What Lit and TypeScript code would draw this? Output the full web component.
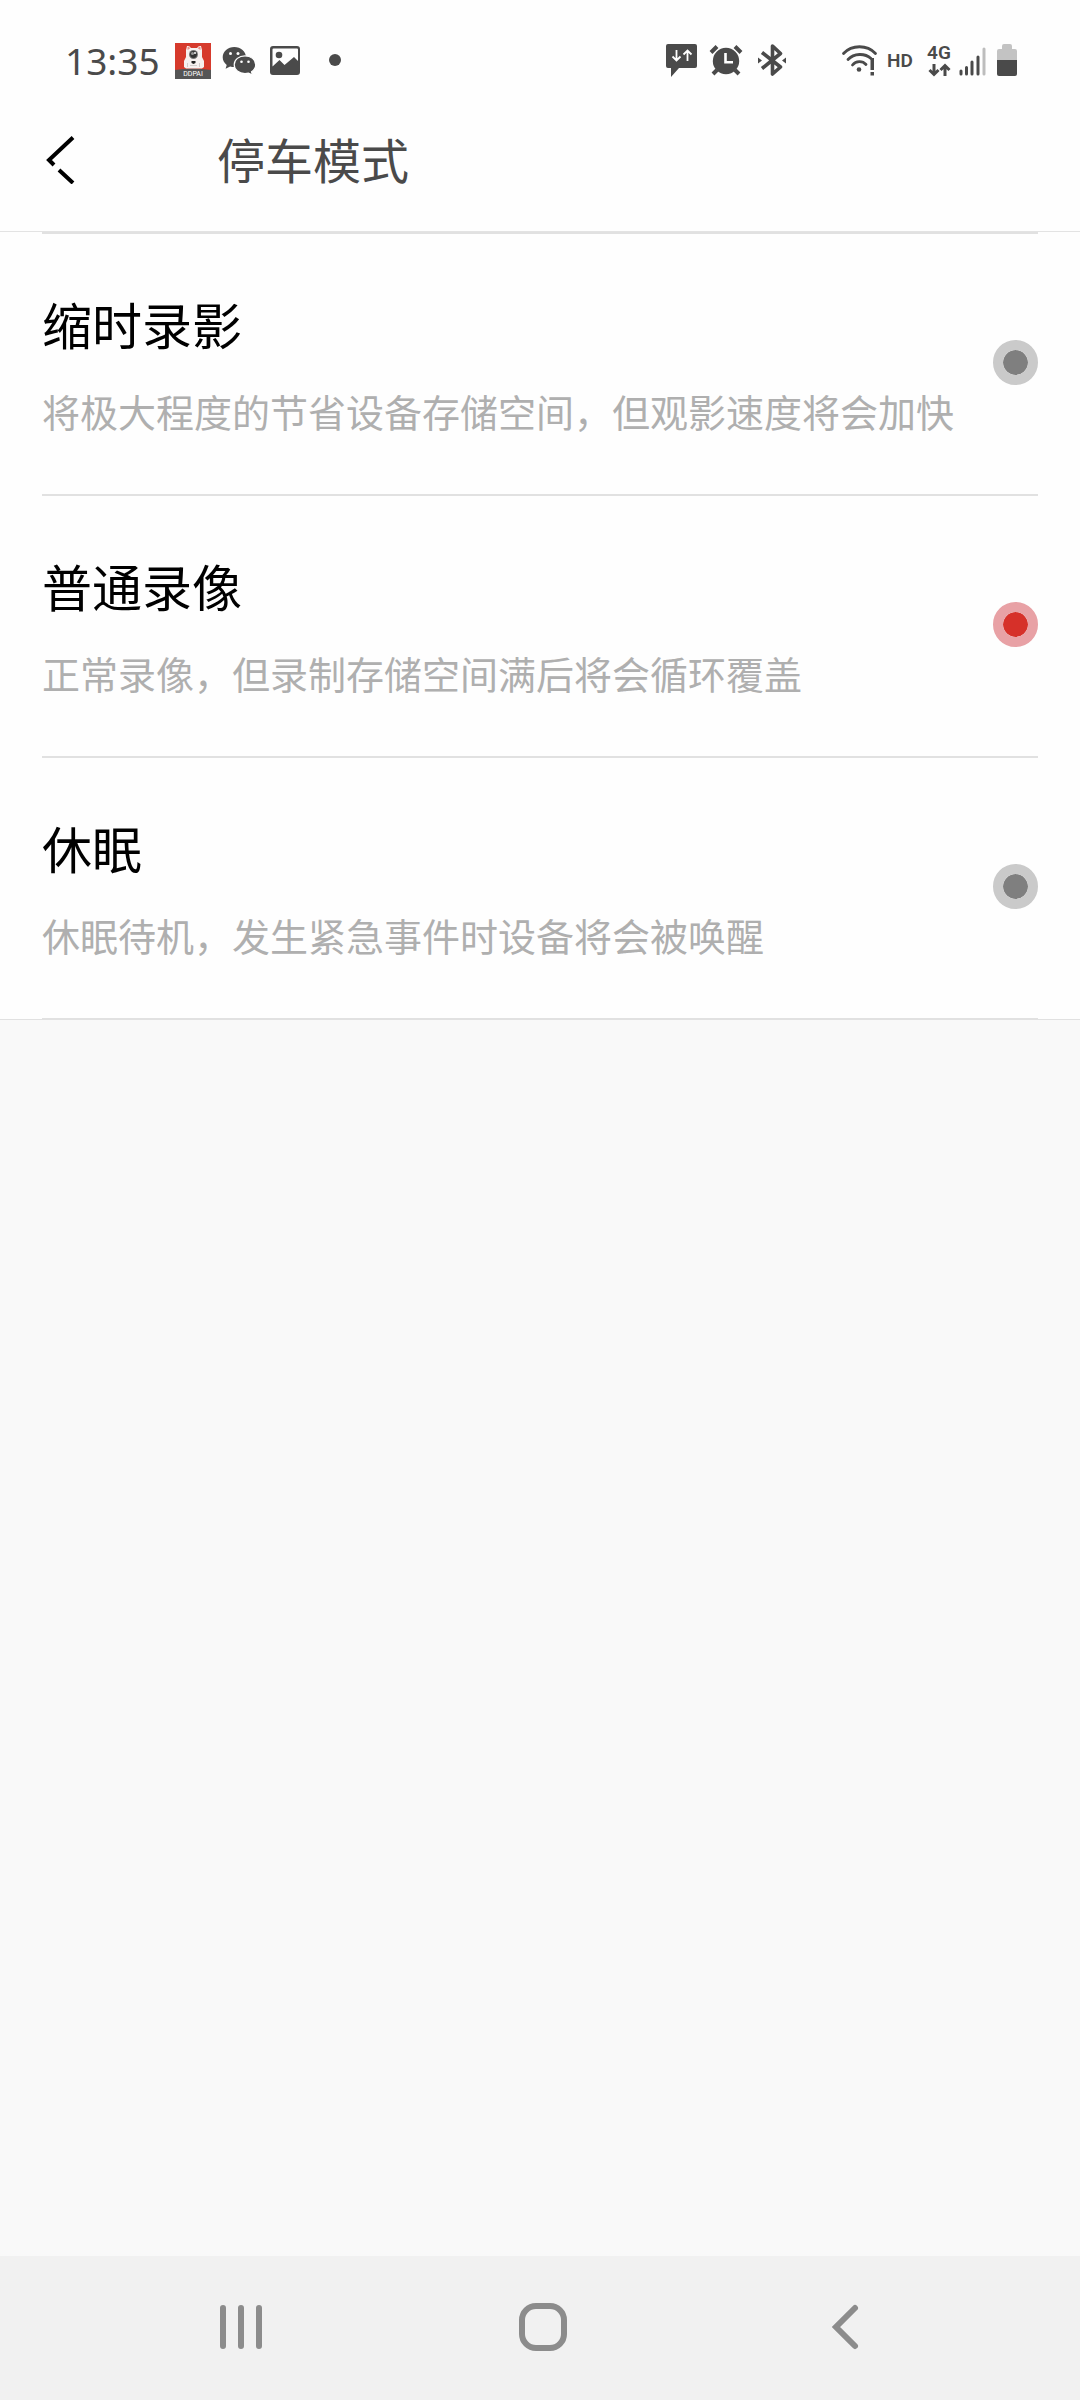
import { LitElement, html, css, svg } from "lit";
import { customElement, property, state } from "lit/decorators.js";

interface ParkingMode {
  id: string;
  title: string;
  detail: string;
}

const MODES: ParkingMode[] = [
  { id: "timelapse", title: "缩时录影", detail: "将极大程度的节省设备存储空间，但观影速度将会加快" },
  { id: "normal", title: "普通录像", detail: "正常录像，但录制存储空间满后将会循环覆盖" },
  { id: "sleep", title: "休眠", detail: "休眠待机，发生紧急事件时设备将会被唤醒" },
];

@customElement("status-bar")
export class StatusBar extends LitElement {
  static styles = css`
    :host {
      display: flex;
      justify-content: space-between;
      align-items: center;
      box-sizing: border-box;
      height: 90px;
      padding: 32px 63px 0 65px;
      color: #4a4a4a;
    }
    .group {
      display: flex;
      align-items: center;
      gap: 11px;
    }
    .alerts {
      gap: 10px;
    }
    .right {
      display: flex;
      align-items: center;
      gap: 51px;
    }
    .radio {
      gap: 8px;
    }
    .time {
      font: 37px/48px "Noto Sans", sans-serif;
      width: 99px;
    }
    .tag {
      font: 600 19px/16px Roboto, sans-serif;
    }
    .hd {
      width: 32px;
    }
    .network {
      display: flex;
      flex-direction: column;
      align-items: center;
      gap: 2px;
    }
    svg {
      display: block;
      fill: currentColor;
    }
    .stroke {
      fill: none;
      stroke: currentColor;
    }
    .logo-text {
      font: 400 7px Roboto, sans-serif;
    }
  `;

  render() {
    return html`
      <div class="group">
        <span class="time">13:35</span>
        <svg width="36" height="36" viewBox="0 0 36 36" aria-hidden="true">
          <rect width="36" height="36" fill="#d63a2c" />
          <path d="M0 27 Q18 24 36 27 V36 H0Z" fill="#555" />
          <path d="M12 3h2l2 2h6l2-2h2l1 4v7l2 4v6l-2 1.500H11L9 24v-6l2-4V7z" fill="#f6f1f0" />
          <path d="M12.500 4l1.500-.5 1 2-2.500 1.500zM25.500 4l-1.500-.5-1 2 2.500 1.500z" fill="#e99289" />
          <circle cx="18.500" cy="11.500" r="4.500" fill="#777" />
          <circle cx="18.500" cy="11.500" r="3.400" fill="#333" />
          <circle cx="17.500" cy="10.500" r="1.500" fill="#999" />
          <circle cx="20" cy="10" r="1" fill="#fff" />
          <path d="M16.500 18h4v2l-2 1-2-1z" fill="#222" />
          <path d="M15 22.500h7M12.500 20v4M24.500 20v4" stroke="#d2cccb" stroke-width="1" />
          <text class="logo-text" x="18" y="33" text-anchor="middle" fill="#fff">DDPAI</text>
        </svg>
        <svg width="36" height="36" viewBox="0 0 36 36" aria-hidden="true">
          <path d="M12.300 4C5.900 4 .7 8.600 .7 14.300c0 3.100 1.500 5.700 4 7.600L3.600 25.800l4.500-2.300c1.300.4 2.700.6 4.200.6C18.700 24.100 24 20 24 14.300S18.700 4 12.300 4z" />
          <path d="M23 12.800c-6.100 0-10.800 4-10.800 8.900s4.700 8.900 10.800 8.900c1.200 0 2.400-.2 3.500-.5l4 2-1-3.300c2.500-1.700 4.200-4.200 4.200-7.100 0-4.900-4.700-8.900-10.700-8.900z" stroke="#fff" stroke-width="1.200" />
          <g fill="#fff">
            <circle cx="8.500" cy="10.500" r="1.500" /><circle cx="16" cy="10.500" r="1.500" />
            <circle cx="19.500" cy="18.700" r="1.300" /><circle cx="26.500" cy="18.700" r="1.300" />
          </g>
        </svg>
        <svg width="36" height="36" viewBox="0 0 36 36" aria-hidden="true">
          <path fill-rule="evenodd" d="M4 3h24q3 0 3 3v23q0 3-3 3H4q-3 0-3-3V6q0-3 3-3zM3.500 6.500v17l7-6.500 5 5 9.500-8 4 4V6.500q0-1-1-1H4.500q-1 0-1 1z" />
          <circle cx="10" cy="12" r="3.300" />
        </svg>
        <svg width="36" height="36" viewBox="0 0 36 36" aria-hidden="true">
          <circle cx="19" cy="17" r="6" />
        </svg>
      </div>
      <div class="right">
        <div class="group alerts">
          <svg width="36" height="36" viewBox="0 0 36 36" aria-hidden="true">
            <path d="M6 1h27q2 0 2 2v20q0 2-2 2H17L9 34V25H6q-2 0-2-2V3q0-2 2-2z" />
            <path d="M14.500 7v10.500M10.500 13.500l4 4 4-4M25.500 18V7.500M21.500 11.500l4-4 4 4" fill="none" stroke="#fff" stroke-width="1.800" />
          </svg>
          <svg width="36" height="36" viewBox="0 0 36 36" aria-hidden="true">
            <circle cx="18" cy="18" r="13.200" />
            <path class="stroke" stroke-width="4" d="M3 9.500l6-6M27 3.500l6 6M9 27l-4 4M27 27l4 4" />
            <path d="M17.500 10v9.200H25" fill="none" stroke="#fff" stroke-width="2.600" />
          </svg>
          <svg width="36" height="36" viewBox="0 0 36 36" aria-hidden="true">
            <path class="stroke" stroke-width="3.600" stroke-linejoin="round" d="M8 9.500L26.500 24 18.500 31V3l8 7.500L8 25.500" />
            <path d="M4 14.500l4 3-4 3zM32 14.500l-4 3 4 3z" />
          </svg>
        </div>
        <div class="group radio">
          <svg width="38" height="36" viewBox="0 0 38 36" aria-hidden="true">
            <g class="stroke" stroke-width="2.800" stroke-linecap="round">
              <path d="M2.500 10.500C11 1.500 26 1.500 34.500 10.500" />
              <path d="M7 16.500c6-6.500 17-6.500 23-1" />
              <path d="M11.500 22c3.500-4.500 10-4.500 13.500-.5" />
            </g>
            <circle cx="18" cy="26.500" r="2.300" />
            <path d="M29.500 15h3.500v12h-3.500zM29.500 29h3.500v3.500h-3.500z" />
          </svg>
          <span class="tag hd">HD</span>
          <div class="network">
            <span class="tag">4G</span>
            <svg width="24" height="14" viewBox="0 0 24 14" aria-hidden="true">
              <path class="stroke" stroke-width="3" d="M7 1v10M2.500 7L7 11.500 11.500 7M18 13V3M13.500 7L18 2.500 22.500 7" />
            </svg>
          </div>
          <svg width="30" height="36" viewBox="2 0 30 36" aria-hidden="true">
            <path class="stroke" stroke-width="3" stroke-linecap="round" d="M4 28v3M9.500 24.500v6.500M15 19v12M21 14v17" />
            <path d="M27 6v25" stroke="#bdbdbd" stroke-width="3" stroke-linecap="round" />
          </svg>
          <svg width="20" height="36" viewBox="0 0 20 36" aria-hidden="true">
            <path d="M7 1h6q2 0 2 2v3h3q2 0 2 2v9H0V8q0-2 2-2h3V3q0-2 2-2z" fill="#c3c3c3" />
            <path d="M0 17h20v14q0 2-2 2H2q-2 0-2-2z" />
          </svg>
        </div>
      </div>
    `;
  }
}

@customElement("mode-option")
export class ModeOption extends LitElement {
  @property({ attribute: false }) mode!: ParkingMode;
  @property({ type: Boolean }) selected = false;

  static styles = css`
    :host {
      display: block;
    }
    .row {
      display: flex;
      align-items: center;
      justify-content: space-between;
      gap: 32px;
      padding-bottom: 4px;
      border-bottom: 2px solid #e1e1e1;
    }
    .text {
      display: flex;
      flex-direction: column;
      gap: 32px;
      padding: 59px 0 53px;
    }
    .title {
      font-size: 50px;
      line-height: 60px;
      color: #000;
    }
    .detail {
      font-size: 38px;
      line-height: 52px;
      color: #afafaf;
    }
    .dot {
      appearance: none;
      flex: none;
      box-sizing: border-box;
      width: 45px;
      height: 45px;
      margin: 0;
      border: 10px solid #cacaca;
      border-radius: 50%;
      background: #7f7f7f;
      background-clip: padding-box;
    }
    .dot:checked {
      border-color: #e8a1a5;
      background-color: #d63029;
    }
  `;

  private choose() {
    this.dispatchEvent(new CustomEvent("choose", { detail: this.mode.id }));
  }

  render() {
    return html`
      <label class="row" for="choice">
        <span class="text">
          <span class="title">${this.mode.title}</span>
          <span class="detail">${this.mode.detail}</span>
        </span>
        <input class="dot" id="choice" type="radio" name="mode" .checked=${this.selected} @change=${this.choose} />
      </label>
    `;
  }
}

const RECENTS = svg`<path d="M6 5v38M24 5v38M42 5v38" />`;
const HOME = svg`<rect x="3" y="3" width="42" height="42" rx="14" />`;
const BACK = svg`<path d="M34 5L15 24l19 19" />`;

@customElement("navigation-bar")
export class NavigationBar extends LitElement {
  static styles = css`
    :host {
      display: block;
      background: #f1f1f1;
    }
    .bar {
      display: grid;
      grid-template-columns: repeat(3, 1fr);
      padding: 0 84px 0 90px;
    }
    .key {
      display: flex;
      justify-content: center;
      align-items: center;
      height: 144px;
      padding: 0 0 2px;
      border: 0;
      background: none;
    }
    .icon {
      fill: none;
      stroke: #8c8c8c;
      stroke-width: 6px;
      stroke-linecap: round;
      overflow: visible;
    }
  `;

  private key(label: string, shape: unknown) {
    return html`<button class="key" type="button" aria-label=${label}>
      <svg class="icon" width="48" height="48" viewBox="0 0 48 48">${shape}</svg>
    </button>`;
  }

  render() {
    return html`<nav class="bar">${this.key("最近", RECENTS)}${this.key("主屏幕", HOME)}${this.key("返回", BACK)}</nav>`;
  }
}

@customElement("app-root")
export class AppRoot extends LitElement {
  @state() private current = "normal";

  static styles = css`
    :host {
      display: flex;
      flex-direction: column;
      min-height: 100vh;
      background: #f9f9f9;
      font-family: "Noto Sans CJK SC", sans-serif;
    }
    .top {
      background: #fefefe;
      border-bottom: 1px solid #e3e3e3;
    }
    .header {
      display: flex;
      align-items: center;
      gap: 139px;
      box-sizing: border-box;
      height: 141px;
      padding: 0 42px 2px;
    }
    .back {
      display: flex;
      padding: 0;
      border: 0;
      background: none;
    }
    .chevron {
      fill: none;
      stroke: #000;
      stroke-width: 4px;
    }
    .heading {
      margin: 0;
      padding-bottom: 4px;
      font-size: 48px;
      line-height: 60px;
      font-weight: 400;
      color: #4a4a4a;
    }
    .list {
      padding: 0 42px;
      background: #fefefe;
      box-shadow: inset 0 -1px #e1e1e1;
    }
    .rows {
      border-top: 2px solid #e1e1e1;
    }
    .fill {
      flex: 1;
    }
  `;

  render() {
    return html`
      <div class="top">
        <status-bar></status-bar>
        <header class="header">
          <button class="back" type="button" aria-label="返回">
            <svg class="chevron" width="36" height="48" viewBox="0 0 36 48">
              <path d="M31 1.500L7 24l5 5M17 34l14 13" />
            </svg>
          </button>
          <h1 class="heading">停车模式</h1>
        </header>
      </div>
      <main class="list">
        <div class="rows" role="radiogroup" aria-label="停车模式">
          ${MODES.map(
            (mode) => html`<mode-option
              .mode=${mode}
              ?selected=${mode.id === this.current}
              @choose=${(e: CustomEvent<string>) => (this.current = e.detail)}
            ></mode-option>`
          )}
        </div>
      </main>
      <div class="fill"></div>
      <navigation-bar></navigation-bar>
    `;
  }
}
